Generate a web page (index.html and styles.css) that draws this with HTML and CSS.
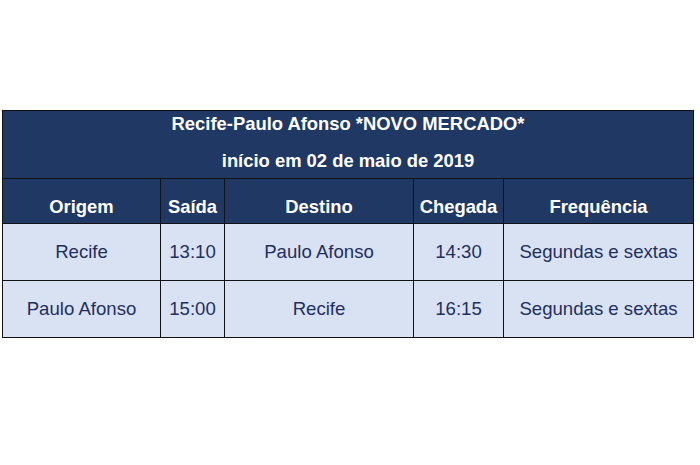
FILE: index.html
```html
<!DOCTYPE html>
<html lang="pt">
<head>
<meta charset="utf-8">
<link rel="stylesheet" href="styles.css">
</head>
<body>
<table class="sched">
  <colgroup>
    <col class="c1"><col class="c2"><col class="c3"><col class="c4"><col class="c5">
  </colgroup>
  <thead>
    <tr class="title-row">
      <th colspan="5">
        <p class="t1">Recife-Paulo Afonso *NOVO MERCADO*</p>
        <p class="t2">início em 02 de maio de 2019</p>
      </th>
    </tr>
    <tr class="head-row">
      <th>Origem</th><th>Saída</th><th>Destino</th><th>Chegada</th><th>Frequência</th>
    </tr>
  </thead>
  <tbody>
    <tr>
      <td>Recife</td><td>13:10</td><td>Paulo Afonso</td><td>14:30</td><td>Segundas e sextas</td>
    </tr>
    <tr>
      <td>Paulo Afonso</td><td>15:00</td><td>Recife</td><td>16:15</td><td>Segundas e sextas</td>
    </tr>
  </tbody>
</table>
</body>
</html>
```
FILE: styles.css
```css
html, body {
  margin: 0;
  padding: 0;
  background: #ffffff;
}
body {
  padding: 110px 0 0 2px;
  font-family: "Liberation Sans", Arial, sans-serif;
}
.sched {
  border-collapse: collapse;
  width: 691px;
  table-layout: fixed;
  border: 1px solid #111;
}
.c1 { width: 158px; }
.c2 { width: 64px; }
.c3 { width: 189px; }
.c4 { width: 90px; }
.c5 { width: 190px; }
.sched th, .sched td {
  border: 1px solid #111;
  text-align: center;
  padding: 0;
}
.title-row th {
  background: #1f3864;
  color: #ffffff;
  height: 67px;
  font-size: 18.4px;
  font-weight: bold;
  vertical-align: top;
}
.title-row p { margin: 0; line-height: 20px; }
.t1 { padding-top: 3px; }
.t2 { padding-top: 17px; }
.head-row th {
  background: #1f3864;
  color: #ffffff;
  height: 39px;
  font-size: 18.4px;
  font-weight: bold;
  vertical-align: bottom;
  padding-bottom: 5px;
}
.sched td {
  background: #d9e2f3;
  color: #1f2f5e;
  height: 56px;
  font-size: 18.6px;
}
```
